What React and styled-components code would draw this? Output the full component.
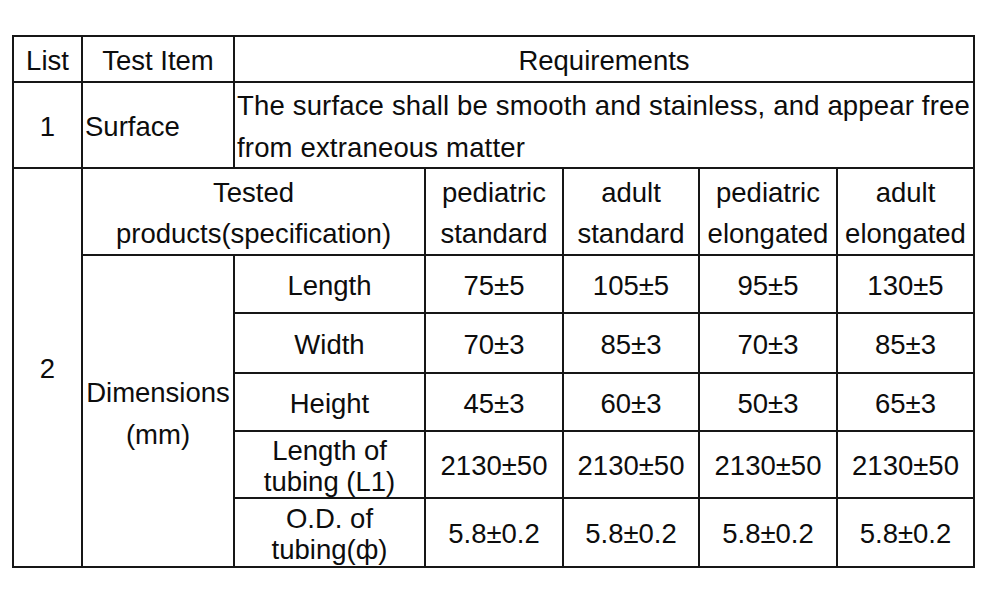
import React from 'react';
import styled, { createGlobalStyle } from 'styled-components';

const GlobalStyle = createGlobalStyle`
  html, body {
    margin: 0;
    padding: 0;
    background: #ffffff;
  }
  body {
    font-family: "Liberation Sans", Arial, sans-serif;
    color: #0d0d0d;
  }
`;

const Page = styled.div`
  width: 1000px;
  height: 595px;
  padding: 35px 0 0 12px;
  box-sizing: border-box;
`;

const Grid = styled.div`
  display: inline-grid;
  grid-template-columns: 67px 150px 189px 136px 134px 136px 135px;
  grid-template-rows: 44px 84px 85px 56px 58px 56px 65px 67px;
  gap: 2px;
  padding: 2px;
  background: #161616;
`;

const Cell = styled.div`
  grid-column: ${(p) => p.col || 'auto'};
  grid-row: ${(p) => p.row || 'auto'};
  background: #ffffff;
  display: flex;
  align-items: center;
  justify-content: ${(p) => (p.left ? 'flex-start' : 'center')};
  text-align: ${(p) => (p.left ? 'left' : 'center')};
  padding-left: ${(p) => (p.left ? '2px' : '0')};
  padding-top: ${(p) => p.shift || 3}px;
  box-sizing: border-box;
  font-size: 27.5px;
  line-height: ${(p) => p.lh || 32}px;
  letter-spacing: ${(p) => p.track || 0}px;
  white-space: nowrap;
  overflow: visible;
`;

const specs = [
  ['pediatric', 'standard'],
  ['adult', 'standard'],
  ['pediatric', 'elongated'],
  ['adult', 'elongated'],
];

const dimensions = [
  { label: ['Length'], values: ['75±5', '105±5', '95±5', '130±5'] },
  { label: ['Width'], values: ['70±3', '85±3', '70±3', '85±3'] },
  { label: ['Height'], values: ['45±3', '60±3', '50±3', '65±3'] },
  { label: ['Length of', 'tubing (L1)'], values: ['2130±50', '2130±50', '2130±50', '2130±50'] },
  { label: ['O.D. of', 'tubing(ф)'], values: ['5.8±0.2', '5.8±0.2', '5.8±0.2', '5.8±0.2'] },
];

const Lines = ({ lines }) =>
  lines.map((l, i) => (
    <React.Fragment key={i}>
      {i > 0 && <br />}
      {l}
    </React.Fragment>
  ));

const App = () => (
  <>
    <GlobalStyle />
    <Page>
      <Grid>
        <Cell col="1" row="1">List</Cell>
        <Cell col="2" row="1">Test Item</Cell>
        <Cell col="3 / 8" row="1">Requirements</Cell>

        <Cell col="1" row="2">1</Cell>
        <Cell col="2" row="2" left>Surface</Cell>
        <Cell col="3 / 8" row="2" left lh={41.5} track={0.17}>
          <div>
            The surface shall be smooth and stainless, and appear free
            <br />
            from extraneous matter
          </div>
        </Cell>

        <Cell col="1" row="3 / 9">2</Cell>
        <Cell col="2 / 4" row="3" lh={41}>
          <div>
            Tested
            <br />
            products(specification)
          </div>
        </Cell>
        {specs.map((s, i) => (
          <Cell key={i} col={`${4 + i}`} row="3" lh={41}>
            <div>
              <Lines lines={s} />
            </div>
          </Cell>
        ))}

        <Cell col="2" row="4 / 9" lh={42} shift={6}>
          <div>
            Dimensions
            <br />
            (mm)
          </div>
        </Cell>
        {dimensions.map((d, r) => (
          <React.Fragment key={r}>
            <Cell col="3" row={`${4 + r}`} lh={31}>
              <div>
                <Lines lines={d.label} />
              </div>
            </Cell>
            {d.values.map((v, c) => (
              <Cell key={c} col={`${4 + c}`} row={`${4 + r}`}>
                {v}
              </Cell>
            ))}
          </React.Fragment>
        ))}
      </Grid>
    </Page>
  </>
);

export default App;
